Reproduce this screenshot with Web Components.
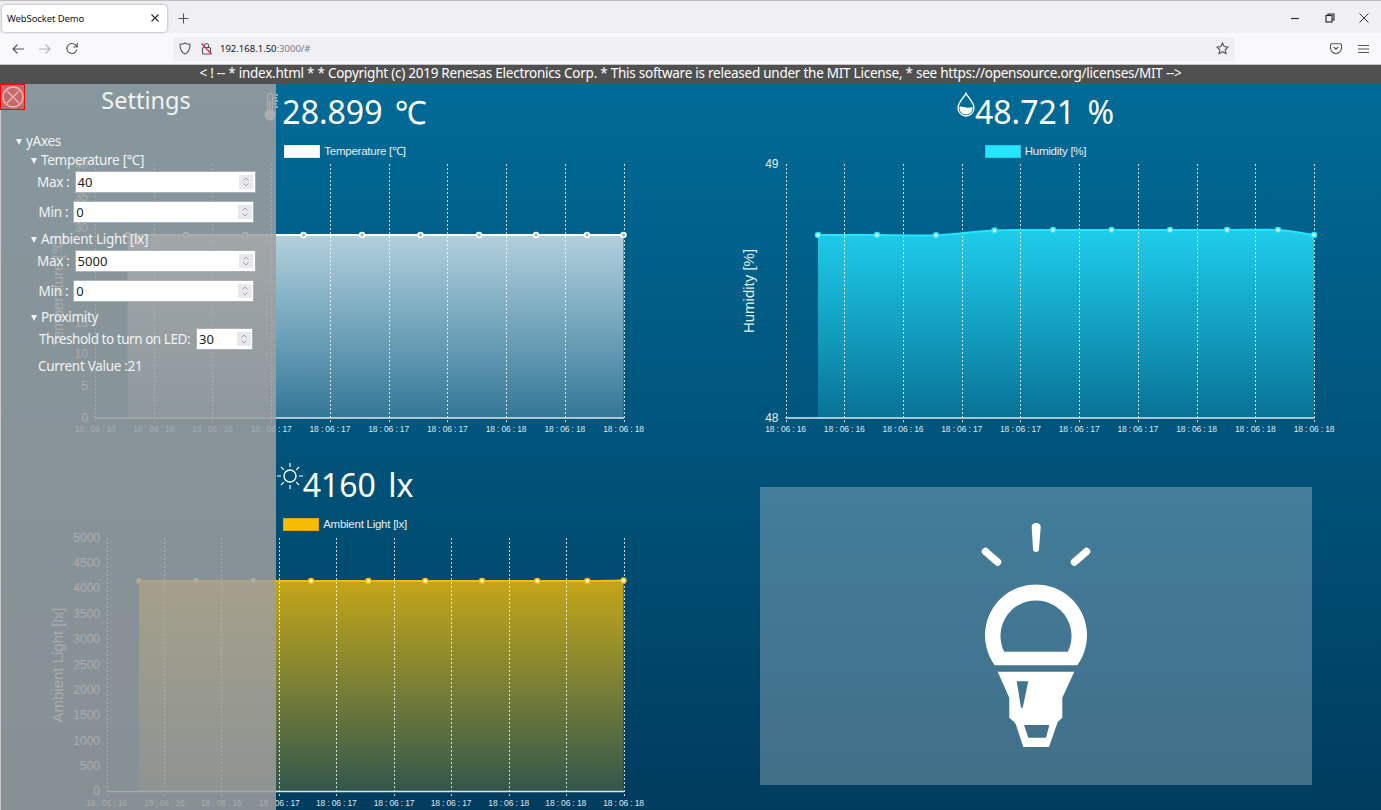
<!DOCTYPE html>
<html lang="en">
<head>
<meta charset="utf-8">
<title>WebSocket Demo</title>
<style>
    html, body { margin: 0; height: 100%; overflow: hidden; }
    body { font-family: "Noto Sans", "Noto Sans CJK JP", sans-serif; background: #003c5e; }
    svg { display: block; }
</style>
</head>
<body>
<app-shell>
    <browser-chrome slot="chrome" tab-title="WebSocket Demo"></browser-chrome>
    <page-banner slot="banner">&lt; ! -- * index.html * * Copyright (c) 2019 Renesas Electronics Corp. * This software is released under the MIT License, * see https://opensource.org/licenses/MIT --&gt;</page-banner>
    <sensor-card chart="temperature">
        <svg slot="icon" width="16" height="32" viewBox="0 0 16 32" fill="none" stroke="#fff" stroke-width="1.2" style="margin:8px 3px 0 0">
            <path d="M4.500 18V3.500a2.500 2.500 0 0 1 5 0V18"/>
            <circle cx="7" cy="23" r="5.500" fill="#fff" stroke="none"/>
            <rect x="6" y="9" width="2" height="12" fill="#fff" stroke="none"/>
            <path d="M11 3h4M11 6h3M11 9h4M11 12h3M11 15h4" stroke-width="1"/>
        </svg>
        28.899 ℃
        <span slot="legend">Temperature [℃]</span>
    </sensor-card>
    <sensor-card chart="humidity">
        <svg slot="icon" width="18" height="25" viewBox="0 0 18 25" style="margin:8px 0 0 0">
            <path d="M9 1.200C7.500 5 1 10 1 16a8 8 0 0 0 16 0C17 10 10.500 5 9 1.200z" fill="none" stroke="#fff" stroke-width="1.300"/>
            <path d="M2.500 15C5 13.500 7 17 15.500 15C16 19.500 13 22.500 9 22.500S2 19.500 2.500 15z" fill="#fff"/>
        </svg>
        48.721 %
        <span slot="legend">Humidity [%]</span>
    </sensor-card>
    <sensor-card chart="light">
        <svg slot="icon" width="26" height="28" viewBox="0 0 26 28" fill="none" stroke="#fff" style="margin:5px 0 0 0">
            <circle cx="13" cy="14" r="6" stroke-width="1.400"/>
            <path d="M13 1v4M13 23v4M0 14h4M22 14h4M4 5l2.800 2.800M19.200 20.200L22 23M22 5l-2.800 2.800M6.800 20.200L4 23" stroke-width="1.200"/>
        </svg>
        4160 lx
        <span slot="legend">Ambient Light [lx]</span>
    </sensor-card>
    <lamp-card></lamp-card>
    <settings-panel slot="overlay">
        <settings-group label="yAxes" style="--body-indent:15px;--head-gap:0">
            <settings-group label="Temperature [℃]" style="--body-indent:7px;--head-gap:.5px">
                <number-field label="Max :" value="40"></number-field>
                <number-field label="Min :" value="0" style="margin-left:1.500px;margin-bottom:7.500px"></number-field>
            </settings-group>
            <settings-group label="Ambient Light [lx]" style="--body-indent:7px;--head-gap:.5px">
                <number-field label="Max :" value="5000"></number-field>
                <number-field label="Min :" value="0" style="margin-left:1.500px;margin-bottom:6.500px"></number-field>
            </settings-group>
            <settings-group label="Proximity" style="--body-indent:9px;--head-gap:1px">
                <number-field label="Threshold to turn on LED:" value="30" style="--field-width:57px;letter-spacing:-.45px;gap:6px;margin-bottom:6.500px"></number-field>
                <div style="height:19px;line-height:19px;margin-left:-1px">Current Value :21</div>
            </settings-group>
        </settings-group>
    </settings-panel>
</app-shell>
<script>
function mkTmplt(innerHtml) {
    var tmplt = document.createElement("template");
    tmplt.innerHTML = innerHtml;
    return tmplt;
}

const T16 = "18 : 06 : 16", T17 = "18 : 06 : 17", T18 = "18 : 06 : 18";

// all chart coordinates are page pixels, the svg viewBox maps them back
const CHARTS = {
    temperature: {
        originX: 0, originY: 158, height: 299,
        left: 95, right: 623.5, top: 164, bottom: 418,
        yTicks: [[40, 165], [35, 197], [30, 228], [25, 260], [20, 291], [15, 323], [10, 354], [5, 386], [0, 418]],
        yLabelX: 88, title: "Temperature [℃]", titleX: 57, titleY: 291,
        times: [T16, T16, T16, T17, T17, T17, T17, T18, T18, T18],
        xs: [127.7, 186, 245, 303.500, 362, 420.500, 479, 536, 587, 623.500],
        ys: [235, 235, 235, 235, 235, 235, 235, 235, 235, 235],
        color: "255,255,255", line: "#fff", dot: "#9fbecb", alpha: 0.7
    },
    humidity: {
        originX: 690, originY: 158, height: 299,
        left: 785.5, right: 1314, top: 164, bottom: 418,
        yTicks: [[49, 164], [48, 418]],
        yLabelX: 778.5, title: "Humidity [%]", titleX: 748, titleY: 291,
        times: [T16, T16, T16, T17, T17, T17, T17, T18, T18, T18],
        xs: [818, 877, 936, 994.500, 1053, 1111.500, 1170, 1227, 1278, 1314],
        ys: [235, 235, 235.300, 230.500, 230, 230, 230, 230, 230, 235],
        color: "37,229,255", line: "#25e5ff", dot: "#fff", alpha: 0.8
    },
    light: {
        originX: 0, originY: 531, height: 279,
        left: 106.5, right: 623.5, top: 538, bottom: 791.5,
        yTicks: [[5000, 538], [4500, 563], [4000, 588], [3500, 614], [3000, 639], [2500, 665], [2000, 690], [1500, 715], [1000, 741], [500, 766], [0, 791]],
        yLabelX: 100, title: "Ambient Light [lx]", titleX: 57, titleY: 665,
        times: [T16, T16, T16, T17, T17, T17, T17, T18, T18, T18],
        gridXs: [106.500, 164.300, 221.300, 279.300, 336.300, 394, 451, 508.700, 565.700, 623.500],
        xs: [139, 196, 253.300, 311, 368.300, 425.300, 482, 537.300, 587.300, 623.500],
        ys: [581, 581, 581, 581, 581, 581, 581, 581, 581, 580.500],
        color: "245,188,0", line: "#f5bc00", dot: "#fff", alpha: 0.8
    }
};

function smoothPath(xs, ys) {
    let d = "";
    for (let i = 0; i < xs.length - 1; i++) {
        let p = i > 0 ? i - 1 : i;
        let n = i + 2 < xs.length ? i + 2 : i + 1;
        let c1x = xs[i] + (xs[i + 1] - xs[p]) * 0.16, c1y = ys[i] + (ys[i + 1] - ys[p]) * 0.16;
        let c2x = xs[i + 1] - (xs[n] - xs[i]) * 0.16, c2y = ys[i + 1] - (ys[n] - ys[i]) * 0.16;
        d += ` C${c1x} ${c1y} ${c2x} ${c2y} ${xs[i + 1]} ${ys[i + 1]}`;
    }
    return d;
}

function chartSvg(key, c) {
    let gridXs = c.gridXs;
    if (!gridXs) {
        gridXs = c.times.map((t, i) => c.left + (c.right - c.left) * i / (c.times.length - 1));
    }
    let curve = smoothPath(c.xs, c.ys);
    let n = c.xs.length - 1;
    let s = `<svg width="691" height="${c.height}" viewBox="${c.originX} ${c.originY} 691 ${c.height}">`;
    s += `<defs><linearGradient id="fill-${key}" gradientUnits="userSpaceOnUse" x1="0" x2="0" y1="${c.ys[0]}" y2="${c.bottom}">
            <stop offset="0" stop-color="rgb(${c.color})" stop-opacity="${c.alpha}"/>
            <stop offset="1" stop-color="rgb(${c.color})" stop-opacity=".2"/>
        </linearGradient></defs>`;
    s += `<path d="M${c.xs[0]} ${c.bottom} L${c.xs[0]} ${c.ys[0]}${curve} L${c.xs[n]} ${c.bottom}Z" fill="url(#fill-${key})"/>`;
    gridXs.forEach((x, i) => {
        let rx = Math.round(x) + 0.5;
        s += `<line x1="${rx}" x2="${rx}" y1="${c.top}" y2="${c.bottom + 5}" stroke="#fff" stroke-opacity=".8" stroke-dasharray="2 2"/>`;
        s += `<text x="${x}" y="${c.bottom + 14}" text-anchor="middle" class="tick">${c.times[i]}</text>`;
    });
    s += `<line x1="${c.left}" x2="${c.right + 0.5}" y1="${c.bottom}" y2="${c.bottom}" stroke="#dfe6ea" stroke-width="1.500"/>`;
    c.yTicks.forEach(t => {
        s += `<text x="${c.yLabelX}" y="${t[1] + 4}" text-anchor="end" class="ylabel">${t[0]}</text>`;
    });
    s += `<text transform="translate(${c.titleX + 6} ${c.titleY}) rotate(-90)" text-anchor="middle" class="ytitle">${c.title}</text>`;
    s += `<path d="M${c.xs[0]} ${c.ys[0]}${curve}" fill="none" stroke="${c.line}" stroke-width="2"/>`;
    c.xs.forEach((x, i) => {
        s += `<circle cx="${x}" cy="${c.ys[i]}" r="2.500" fill="${c.dot}" stroke="${c.line}" stroke-width="1.500"/>`;
    });
    return s + "</svg>";
}

class AppShell extends HTMLElement {
    constructor() {
        super();
        const shadow = this.attachShadow({ mode: "open" });
        shadow.append(AppShell._tmplt.content.cloneNode(true));
    }
}
AppShell._tmplt = mkTmplt(`
    <slot name="chrome"></slot>
    <slot name="banner"></slot>
    <div class="dashboard">
        <slot></slot>
        <slot name="overlay"></slot>
    </div>
    <style>
        :host { display: flex; flex-direction: column; width: 1381px; height: 810px; overflow: hidden; }
        .dashboard {
            position: relative;
            flex: 1;
            display: grid;
            grid-template-columns: 690px 691px;
            grid-template-rows: 373px 353px;
            background: linear-gradient(#006b97, #003c5e);
        }
    </style>
`);

class BrowserChrome extends HTMLElement {
    constructor() {
        super();
        const shadow = this.attachShadow({ mode: "open" });
        shadow.append(BrowserChrome._tmplt.content.cloneNode(true));
        shadow.querySelector("#title").textContent = this.getAttribute("tab-title");
    }
}
BrowserChrome._tmplt = mkTmplt(`
    <div class="tabbar">
        <div class="tab">
            <span id="title"></span>
            <svg width="10" height="10" viewBox="0 0 10 10" stroke="#2b2a33" stroke-width="1.100"><path d="M1.500 1.500l7 7M8.500 1.500l-7 7"/></svg>
        </div>
        <svg class="plus" width="11" height="11" viewBox="0 0 11 11" stroke="#55545c" stroke-width="1.100"><path d="M5.500 .5v10M.5 5.500h10"/></svg>
        <div class="winbtns">
            <svg width="10" height="10" viewBox="0 0 10 10" stroke="#333" stroke-width="1.200"><path d="M1 5.500h8"/></svg>
            <svg width="10" height="10" viewBox="0 0 10 10" fill="none" stroke="#222" stroke-width="1.100"><rect x="1" y="2.500" width="6" height="6.500"/><path d="M3 2.500V1h6v6H7" /></svg>
            <svg width="10" height="10" viewBox="0 0 10 10" stroke="#333" stroke-width="1"><path d="M.5 .5l9 9M9.500 .5l-9 9"/></svg>
        </div>
    </div>
    <div class="toolbar">
        <div class="nav">
            <svg width="14" height="14" viewBox="0 0 14 14" fill="none" stroke="#55545c" stroke-width="1.100"><path d="M13 7H2M6.500 2.500L2 7l4.500 4.500"/></svg>
            <svg width="14" height="14" viewBox="0 0 14 14" fill="none" stroke="#b4b4ba" stroke-width="1.100"><path d="M1 7h11M7.500 2.500L12 7l-4.500 4.500"/></svg>
            <svg width="14" height="14" viewBox="0 0 14 14" fill="none" stroke="#55545c" stroke-width="1.100"><path d="M11.800 7.500A5 5 0 1 1 10.500 3L12 4.500"/><path d="M12.300 1v4h-4" /></svg>
        </div>
        <div class="urlbar">
            <svg width="12" height="13" viewBox="0 0 12 13" fill="none" stroke="#55545c" stroke-width="1.100"><path d="M6 1c1.500 1 3 1.300 5 1.300C11 7 10 10.500 6 12 2 10.500 1 7 1 2.300 3 2.300 4.500 2 6 1z"/></svg>
            <svg class="lock" width="13" height="13" viewBox="0 0 13 13" fill="none"><rect x="2.500" y="5.500" width="8" height="6.500" rx="1" stroke="#55545c" stroke-width="1.100"/><path d="M4.500 5.500V3.500a2 2 0 0 1 4 0v2" stroke="#55545c" stroke-width="1.100"/><path d="M1.500 1.500l10 10.500" stroke="#e22850" stroke-width="1.300"/></svg>
            <span class="url">192.168.1.50<span class="dim">:3000/#</span></span>
            <svg class="star" width="13" height="13" viewBox="0 0 13 13" fill="none" stroke="#55545c" stroke-width="1.100"><path d="M6.500 1l1.700 3.600 3.900.5-2.900 2.700.8 3.900-3.500-2-3.500 2 .8-3.900L.9 5.100l3.900-.5z"/></svg>
        </div>
        <div class="tools">
            <svg width="12" height="11" viewBox="0 0 12 11" fill="none" stroke="#55545c" stroke-width="1.100"><path d="M1.500 .8h9a1 1 0 0 1 1 1V5a5.500 5.500 0 0 1-11 0V1.800a1 1 0 0 1 1-1z"/><path d="M3.800 4L6 6.200 8.200 4"/></svg>
            <svg width="11" height="10" viewBox="0 0 11 10" stroke="#55545c" stroke-width="1.100"><path d="M0 1.500h11M0 5h11M0 8.500h11"/></svg>
        </div>
    </div>
    <style>
        :host { display: block; font-family: "Noto Sans", sans-serif; color: #15141a; }
        svg { display: block; }
        .tabbar { height: 33px; box-sizing: border-box; border-top: 1px solid #bdbdbd; background: #f0f0f4; display: flex; align-items: center; padding: 2px 0 0 2px; }
        .tab { width: 165px; height: 27px; box-sizing: border-box; background: #fff; border-radius: 4px; box-shadow: 0 0 3px rgba(0,0,0,.35); display: flex; align-items: center; justify-content: space-between; padding: 0 7px 0 5px; font-size: 9.500px; letter-spacing: -.1px; }
        .plus { margin-left: 11px; }
        .winbtns { margin-left: auto; display: flex; gap: 24.500px; padding-right: 12px; }
        .toolbar { height: 32px; box-sizing: border-box; border-bottom: 1px solid #c4c4c6; background: #f9f9fb; display: flex; align-items: center; padding-left: 11px; }
        .nav { display: flex; gap: 13px; width: 162px; }
        .urlbar { width: 1062px; height: 24px; box-sizing: border-box; background: #f0f0f4; border-radius: 4px; display: flex; align-items: center; padding: 0 6px 0 6px; font-size: 9.500px; }
        .lock { margin-left: 9px; }
        .url { margin-left: 7px; }
        .dim { color: #7a7a80; }
        .star { margin-left: auto; }
        .tools { display: flex; gap: 16px; margin-left: 95px; align-items: center; }
    </style>
`);

class PageBanner extends HTMLElement {
    constructor() {
        super();
        const shadow = this.attachShadow({ mode: "open" });
        shadow.append(PageBanner._tmplt.content.cloneNode(true));
    }
}
PageBanner._tmplt = mkTmplt(`
    <slot></slot>
    <style>
        :host { display: block; height: 19px; line-height: 17px; background: #505050; color: #fff; text-align: center; font-size: 13.500px; letter-spacing: -.25px; white-space: nowrap; }
    </style>
`);

class SensorCard extends HTMLElement {
    constructor() {
        super();
        const shadow = this.attachShadow({ mode: "open" });
        shadow.append(SensorCard._tmplt.content.cloneNode(true));
        let key = this.getAttribute("chart");
        let cfg = CHARTS[key];
        shadow.querySelector("#swatch").style.background = cfg.line;
        shadow.querySelector("#chart").innerHTML = chartSvg(key, cfg);
    }
}
SensorCard._tmplt = mkTmplt(`
    <div class="value"><slot name="icon"></slot><span><slot></slot></span></div>
    <div class="legend"><span id="swatch"></span><slot name="legend"></slot></div>
    <div id="chart"></div>
    <style>
        :host { display: flex; flex-direction: column; align-items: center; min-width: 0; color: #fff; }
        .value { display: flex; align-items: flex-start; height: 61px; font-size: 32px; word-spacing: 4px; line-height: 56px; white-space: nowrap; }
        .legend { height: 13px; display: flex; align-items: center; gap: 4px; font: 11.500px/13px "Liberation Sans", sans-serif; letter-spacing: -.25px; color: #e6eef2; }
        #swatch { width: 34px; height: 11px; border: 1px solid rgba(0,0,0,.1); }
        #chart svg { display: block; }
        .tick { font: 8.500px "Liberation Sans", sans-serif; letter-spacing: -.15px; fill: #dfe8ec; }
        .ylabel { font: 12px "Liberation Sans", sans-serif; fill: #e6eef2; }
        .ytitle { font: 15px "Liberation Sans", sans-serif; fill: #e6eef2; }
    </style>
`);

class LampCard extends HTMLElement {
    constructor() {
        super();
        const shadow = this.attachShadow({ mode: "open" });
        shadow.append(LampCard._tmplt.content.cloneNode(true));
    }
}
LampCard._tmplt = mkTmplt(`
    <div class="box">
        <svg width="172" height="250" viewBox="0 0 172 250" fill="#fff">
            <path d="M81.700 16a4.400 4 0 0 1 9 0L89 38a3 3 0 0 1-6 0z"/>
            <path d="M35.500 40.500L47.500 51M136.500 40.500L124.500 51" fill="none" stroke="#fff" stroke-width="7.500" stroke-linecap="round"/>
            <path fill-rule="evenodd" d="M44.700 154.300A51 51 0 1 1 127.300 154.300ZM54.200 140.700A35.500 35.500 0 1 1 117.800 140.700Z"/>
            <path fill-rule="evenodd" d="M47.700 160.700H124.300L112.300 186.700V206.700L108 210.700L107 213L99 236H73.300L65.700 213L64 210.700L59.300 206.700V186.700ZM66.700 170.300H78.300L72.700 196.700H71ZM74 214H99.300L96 226.700H78.300Z"/>
        </svg>
    </div>
    <style>
        :host { display: block; padding: 30px 0 0 70px; }
        .box { width: 552px; height: 298px; background: rgba(255,255,255,.26); display: flex; align-items: center; justify-content: center; }
    </style>
`);

class SettingsPanel extends HTMLElement {
    constructor() {
        super();
        const shadow = this.attachShadow({ mode: "open" });
        shadow.append(SettingsPanel._tmplt.content.cloneNode(true));
    }
}
SettingsPanel._tmplt = mkTmplt(`
    <div class="close">
        <svg width="22" height="22" viewBox="0 0 22 22" fill="none" stroke="#ffb1a8" stroke-width="1.400">
            <circle cx="11" cy="11" r="10"/><path d="M5 5l12 12M17 5L5 17"/>
        </svg>
    </div>
    <h1>Settings</h1>
    <div class="tree"><slot></slot></div>
    <style>
        :host {
            position: absolute;
            left: 0; top: 0; bottom: 0;
            width: 276px;
            box-sizing: border-box;
            border-left: 1px solid #c9c9c9;
            background: rgba(159,159,159,.85);
            color: #f2f2f2;
            font-size: 13.500px;
            display: block;
        }
        .close {
            position: absolute;
            left: -1px; top: 0;
            width: 25px; height: 26px;
            box-sizing: border-box;
            border: 1px solid #f00;
            background: #be6b72;
            display: flex;
            align-items: center;
            justify-content: center;
        }
        h1 { margin: 0 0 12px 15px; height: 36px; line-height: 33px; font-size: 23.500px; font-weight: 400; text-align: center; }
        .tree { padding-left: 14px; letter-spacing: -.3px; }
    </style>
`);

class SettingsGroup extends HTMLElement {
    constructor() {
        super();
        const shadow = this.attachShadow({ mode: "open" });
        shadow.append(SettingsGroup._tmplt.content.cloneNode(true));
        shadow.querySelector("#label").textContent = this.getAttribute("label");
    }
}
SettingsGroup._tmplt = mkTmplt(`
    <div class="head"><i></i><span id="label"></span></div>
    <div class="body"><slot></slot></div>
    <style>
        :host { display: block; }
        .head { height: 19px; line-height: 19px; margin-bottom: var(--head-gap, 1.500px); display: flex; align-items: center; gap: 4px; white-space: nowrap; }
        i { width: 0; height: 0; margin-left: 1px; border: 3px solid transparent; border-top: 6px solid #f2f2f2; border-bottom: 0; }
        .body { padding-left: var(--body-indent, 15px); }
    </style>
`);

class NumberField extends HTMLElement {
    constructor() {
        super();
        const shadow = this.attachShadow({ mode: "open" });
        shadow.append(NumberField._tmplt.content.cloneNode(true));
        shadow.querySelector("#label").textContent = this.getAttribute("label");
        shadow.querySelector("#value").textContent = this.getAttribute("value");
    }
}
NumberField._tmplt = mkTmplt(`
    <span id="label"></span>
    <div class="input">
        <span id="value"></span>
        <svg width="14" height="14" viewBox="0 0 14 14" fill="none" stroke="#a2a2a8"><rect width="14" height="14" fill="#e9e9ed" stroke="none"/><path d="M4.500 5.500L7 3l2.500 2.500M4.500 8.500L7 11l2.500-2.500"/></svg>
    </div>
    <style>
        :host { display: flex; align-items: center; gap: 5px; margin-bottom: 8px; white-space: nowrap; }
        .input {
            width: var(--field-width, 181px);
            height: 22px;
            box-sizing: border-box;
            border: 1px solid #a9b1b6;
            background: #fff;
            color: #222;
            display: flex;
            align-items: center;
            justify-content: space-between;
            padding: 0 1.500px 0 2px;
            font-size: 13px;
            letter-spacing: 0;
        }
        svg { display: block; }
    </style>
`);

customElements.define("app-shell", AppShell);
customElements.define("browser-chrome", BrowserChrome);
customElements.define("page-banner", PageBanner);
customElements.define("sensor-card", SensorCard);
customElements.define("lamp-card", LampCard);
customElements.define("settings-panel", SettingsPanel);
customElements.define("settings-group", SettingsGroup);
customElements.define("number-field", NumberField);
</script>
</body>
</html>
